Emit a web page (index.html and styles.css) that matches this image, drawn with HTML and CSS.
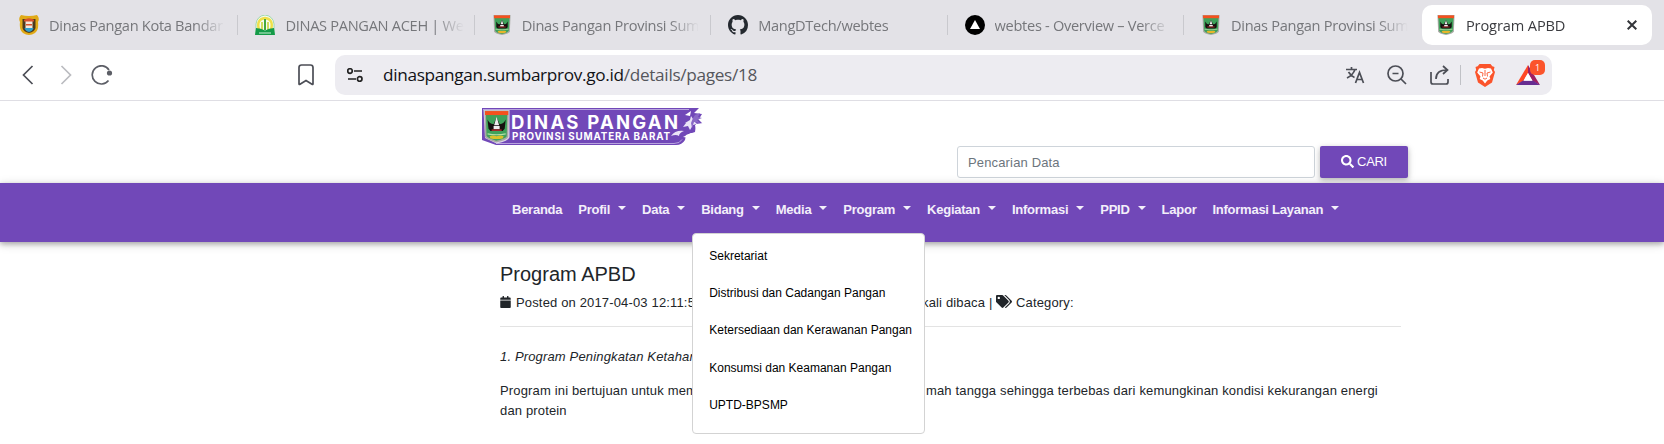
FILE: index.html
```html
<!DOCTYPE html>
<html lang="id">
<head>
<meta charset="utf-8">
<title>Program APBD</title>
<link rel="stylesheet" href="styles.css">
</head>
<body>
<svg class="defs" width="0" height="0" aria-hidden="true">
  <symbol id="crest" viewBox="0 0 24 28">
    <path d="M0 0h24l-1 23q-1 3-11 5Q2 26 1 23z" fill="#a9aaa4"/>
    <path d="M1.500 4h21l-1 18q-1 2.500-9.500 4.500Q3 24.500 2.500 22z" fill="#3fa15a"/>
    <path d="M.8.500h22.400v4H.8z" fill="#f4511e"/>
    <path d="M4 9q1.500 4 5 4l3-6 3 6q3.500 0 5-4v8l-2 2H6l-2-2z" fill="#15100f"/>
    <path d="M12 7.500l2 5.500h-4zM9.500 14h5v2.500h-5z" fill="#eee"/>
    <path d="M7 16h10v1.500H7z" fill="#a02828"/>
    <path d="M3 20q9 1.500 18 0" stroke="#b8dfa8" fill="none"/>
    <path d="M6 22.500q3-1 6 0 3-1 6 0l-1 2.500q-5 1-10 0z" fill="#e8b52a"/>
  </symbol>
</svg>

<div class="tabs">
  <div class="tab">
    <svg class="fav" viewBox="0 0 20 20"><path d="M2 0q8 2 16 0 3 3 1 7 1 8-3 11-6 4-12 0Q0 15 1 7-1 3 2 0z" fill="#e0aa17"/><path d="M3.500 4h13v9q-1 4-6.500 5-5.500-1-6.500-5z" fill="#4d3a1f"/><path d="M6.500 5h7v8h-7z" fill="#f4e9dc"/><path d="M5 4.800q5-3 10 0v1.800H5zM7 9h6v1.500H7z" fill="#d9532c"/><path d="M5.500 13h9q-1 3.500-4.500 4-3.500-.500-4.500-4z" fill="#2d9fd0"/></svg>
    <span class="title">Dinas Pangan Kota Bandar</span>
  </div>
  <div class="tab">
    <svg class="fav" viewBox="0 0 20 20"><path d="M1 19V9q1-8 9-9 8 1 9 9v10z" fill="#f6fbf1" stroke="#8bd39a" stroke-width=".8"/><path d="M4 15Q1 4 10 3q9 1 6 12" fill="none" stroke="#efe04a" stroke-width="2.500"/><path d="M9 4h2v11H9z" fill="#47a83e"/><path d="M7 7v8M13 7v8" stroke="#c6cf2c" stroke-width="1.500"/><path d="M1 13q5 0 9 2.500 4-2.500 9-2.500l1 7H0z" fill="#149a48"/><path d="M4 18h12" stroke="#c9efd4"/></svg>
    <span class="title">DINAS PANGAN ACEH | We</span>
  </div>
  <div class="tab">
    <svg class="fav"><use href="#crest"/></svg>
    <span class="title">Dinas Pangan Provinsi Sum</span>
  </div>
  <div class="tab">
    <svg class="fav" viewBox="0 0 16 16"><path fill="#24292f" d="M8 0C3.580 0 0 3.580 0 8c0 3.540 2.290 6.530 5.470 7.590.4.070.55-.17.55-.38 0-.19-.01-.82-.01-1.490-2.010.37-2.530-.49-2.690-.94-.09-.23-.48-.94-.82-1.130-.28-.15-.68-.52-.01-.53.63-.01 1.080.58 1.230.82.72 1.210 1.870.87 2.330.66.07-.52.28-.87.51-1.070-1.780-.2-3.640-.89-3.640-3.950 0-.87.31-1.590.82-2.150-.08-.2-.36-1.020.08-2.120 0 0 .67-.21 2.200.82.64-.18 1.320-.27 2-.27s1.360.09 2 .27c1.530-1.040 2.200-.82 2.200-.82.44 1.100.16 1.920.08 2.120.51.56.82 1.270.82 2.150 0 3.070-1.870 3.750-3.650 3.950.29.25.54.73.54 1.480 0 1.070-.01 1.930-.01 2.200 0 .21.15.46.55.38A8.010 8.010 0 0 0 16 8c0-4.420-3.580-8-8-8z"/></svg>
    <span class="title">MangDTech/webtes</span>
  </div>
  <div class="tab">
    <svg class="fav" viewBox="0 0 20 20"><circle cx="10" cy="10" r="10"/><path d="M10 5l5 9H5z" fill="#fff"/></svg>
    <span class="title">webtes - Overview – Verce</span>
  </div>
  <div class="tab last">
    <svg class="fav"><use href="#crest"/></svg>
    <span class="title">Dinas Pangan Provinsi Sum</span>
  </div>
  <div class="tab active">
    <svg class="fav"><use href="#crest"/></svg>
    <span class="title">Program APBD</span>
    <svg class="close" viewBox="0 0 10 10"><path d="M.7.700l8.600 8.600M9.300.700L.7 9.300" stroke="#333539" stroke-width="2"/></svg>
  </div>
</div>

<div class="toolbar">
  <svg class="back" viewBox="0 0 12 20"><path d="M10.500 1L1.500 10l9 9"/></svg>
  <svg class="forward" viewBox="0 0 12 20"><path d="M1.500 1l9 9-9 9"/></svg>
  <svg class="reload" viewBox="0 0 22 20"><path d="M17.500 15.500A9.100 9.100 0 1 1 18 5"/><circle cx="18.500" cy="8" r="2.600" fill="#5c5e66" stroke="none"/></svg>
  <svg class="bookmark" viewBox="0 0 16 22"><path d="M1 3.500Q1 1 3.500 1h9Q15 1 15 3.500v16.300q0 1-1 .4L8 16.500l-6 3.700q-1 .6-1-.4z"/></svg>
  <div class="address">
    <svg class="tune" viewBox="0 0 16 14"><circle cx="3" cy="3" r="2.300"/><path d="M7 3h8M1 11h8"/><circle cx="12.700" cy="11" r="2.300"/></svg>
    <span class="url"><b>dinaspangan.sumbarprov.go.id</b>/details/pages/18</span>
    <svg class="translate" viewBox="0 0 20 18"><path d="M1 3.500h11M6.500 1v2.500M10 3.500Q8 9 2 12M3.500 6q2.500 4 6 5.500M10.500 17l4-10.500 4 10.500M12 13.500h5"/></svg>
    <svg class="zoomout" viewBox="0 0 20 20"><circle cx="8.500" cy="8.500" r="7.500"/><path d="M14 14l5 5M5.500 8.500h6"/></svg>
    <svg class="share" viewBox="0 0 20 20"><path d="M1 7v10q0 2 2 2h13q2 0 2-2v-3M6 14Q6 5 17 5M13 1l4.500 4L13 9"/></svg>
    <i class="sep"></i>
    <svg class="lion" viewBox="0 0 20 23"><path d="M4.500 0h11l1.800 2.200L19.500 3l-.7 3L20 8l-3 10.500L10 23l-7-4.500L0 8l1.200-2-.7-3 2.200-.8z" fill="#fb542b"/><path d="M4 4.500l3-.5 3 .8 3-.8 3 .5 1.800 4-3.300 4 .8 2.500-3 1.500-2.300 3-2.300-3-3-1.500.8-2.500-3.300-4z" fill="#fff"/><path d="M4.500 8l3.500 1-.5 3.500M15.500 8L12 9l.5 3.500M10 6v6M8 14l2 1.200L12 14" stroke="#fb542b" fill="none" stroke-width=".9"/></svg>
    <div class="bat">
      <svg viewBox="0 0 24 20"><path d="M12 0L0 20l7.500-4L12 8z" fill="#ff4724"/><path d="M12 0l12 20-7.500-4L12 8z" fill="#9e1f63"/><path d="M0 20l7-4.500h10l7 4.500z" fill="#662d91"/><path d="M12 8l4.500 7.700h-9z" fill="#fff"/></svg>
      <span class="count">1</span>
    </div>
  </div>
</div>

<header class="site-head">
  <svg class="logo" viewBox="0 0 222 40">
    <path d="M0 1h217l-5 5 8 1-3 5 4 4-7 1-1 8-9 3-1 5q-3 5-9 5H14L0 33z" fill="#7148b8"/>
    <path d="M203 8l6-4-1 5zM222 9l-6 3 5 5-8 1 2 8h-6l-8 4 7 1 14 9V8z" fill="#fff"/>
    <path d="M1 2.500h206M14 36.500h178q6 0 8-4" stroke="#b9a4df" fill="none"/>
    <path d="M203 16l5-3 1-4 2 3 4-1-2 4 2 2-4 1-3 5-2-4-5 1 3-4zM189 29q4-6 13-5-5 2-5 5-3-2-8 0z" fill="#ebe4f7"/>
    <path d="M213 8l5-2-2 4 4 1-5 2 3 3-6-1-2 6-1-5 2-5z" fill="#8a69c6"/>
    <path d="M1.500 3h26v27q-1 4-13 6.500L3 31z" fill="#ddd6ea"/>
    <g transform="translate(2.500 3.500) scale(1.010 1.140)">
      <path d="M0 0h24l-.5 23q-1 3-12 5Q1 25 .500 23z" fill="#a9aaa4"/>
      <path d="M1.500 4h21l-.5 18.500q-1 2-10.500 4Q2.500 24 2 22z" fill="#3fa15a"/>
      <path d="M.5.500h23v3.500H.5z" fill="#f4511e"/>
      <path d="M3 8q2 4 6 4l3-6 3 6q4 0 6-4l-1 8-2 2H6l-2-2z" fill="#15100f"/>
      <path d="M12 5.500l2.500 7.500h-5zM9 13.500h6v3H9z" fill="#eee"/>
      <path d="M7 16.500h10V18H7z" fill="#a02828"/>
      <path d="M3 20.500q9 1.500 18 0" stroke="#b8dfa8" fill="none"/>
      <path d="M5 22.500q3.500-1 7 0 3.500-1 7 0l-1 2q-6 1-12 0z" fill="#d9c02a"/>
    </g>
    <text class="l1" x="29" y="21.500" textLength="167">DINAS PANGAN</text>
    <text class="l2" x="30" y="32.500" textLength="158">PROVINSI SUMATERA BARAT</text>
  </svg>
  <form class="search">
    <input type="text" placeholder="Pencarian Data">
    <button type="button"><svg viewBox="0 0 512 512"><path fill="#fff" d="M505 442.700L405.300 343c-4.500-4.500-10.600-7-17-7H372c27.600-35.300 44-79.700 44-128C416 93.100 322.900 0 208 0S0 93.100 0 208s93.100 208 208 208c48.300 0 92.700-16.400 128-44v16.300c0 6.400 2.500 12.500 7 17l99.700 99.700c9.400 9.400 24.600 9.400 33.900 0l28.300-28.300c9.400-9.400 9.400-24.600.1-34zM208 336c-70.700 0-128-57.200-128-128 0-70.700 57.200-128 128-128 70.700 0 128 57.200 128 128 0 70.700-57.200 128-128 128z"/></svg>CARI</button>
  </form>
</header>

<nav class="menu">
  <a>Beranda</a>
  <a class="dd">Profil</a>
  <a class="dd">Data</a>
  <div class="open"><a class="dd">Bidang</a>
    <ul class="drop">
      <li>Sekretariat</li>
      <li>Distribusi dan Cadangan Pangan</li>
      <li>Ketersediaan dan Kerawanan Pangan</li>
      <li>Konsumsi dan Keamanan Pangan</li>
      <li>UPTD-BPSMP</li>
    </ul>
  </div>
  <a class="dd">Media</a>
  <a class="dd">Program</a>
  <a class="dd">Kegiatan</a>
  <a class="dd">Informasi</a>
  <a class="dd">PPID</a>
  <a>Lapor</a>
  <a class="dd">Informasi Layanan</a>
</nav>

<main class="article">
  <h1>Program APBD</h1>
  <div class="meta"><span class="lead"><svg class="cal" viewBox="0 0 448 512"><path d="M0 464c0 26.500 21.500 48 48 48h352c26.500 0 48-21.500 48-48V192H0v272zM448 112v48H0v-48c0-26.500 21.500-48 48-48h48V16q0-16 16-16h32q16 0 16 16v48h128V16q0-16 16-16h32q16 0 16 16v48h48c26.500 0 48 21.500 48 48z"/></svg>Posted on 2017-04-03 12:11:5</span><span>kali dibaca | <svg class="tags" viewBox="0 0 640 512"><path d="M497.900 225.900L286.100 14.100A48 48 0 0 0 252.100 0H48C21.500 0 0 21.500 0 48v204.100a48 48 0 0 0 14.100 33.900l211.800 211.800c18.700 18.700 49.100 18.700 67.900 0l204.100-204.100c18.700-18.700 18.700-49.100 0-67.800zM112 160a48 48 0 1 1 0-96 48 48 0 0 1 0 96zm513.900 133.800L421.800 497.900c-18.700 18.700-49.100 18.700-67.900 0l-.4-.4L527.600 323.500c17-17 26.400-39.600 26.400-63.600s-9.400-46.600-26.400-63.600L331.400 0h48.700a48 48 0 0 1 33.900 14.100l211.800 211.800c18.800 18.800 18.800 49.200.1 67.900z"/></svg> Category:</span></div>
  <hr>
  <p><em>1. Program Peningkatan Ketahan</em></p>
  <p><span class="lead wide">Program ini bertujuan untuk mem</span>mah tangga sehingga terbebas dari kemungkinan kondisi kekurangan energi<br>dan protein</p>
</main>
</body>
</html>
```
FILE: styles.css
```css
* { box-sizing: border-box; }
body { margin: 0; height: 444px; overflow: hidden; background: #fff; color: #212529; font-family: "Liberation Sans", Arial, sans-serif; }
.defs { position: absolute; }

.tabs { display: flex; align-items: center; height: 50px; padding-left: 2px; background: #e3e2e7; font: 14.600px "Open Sans", "Noto Sans", sans-serif; letter-spacing: -.3px; color: #76777b; }
.tab { display: flex; align-items: center; gap: 10px; width: 236.400px; height: 20px; padding: 0 12px 0 17px; border-right: 1px solid #c9c9ce; flex: none; }
.tab.last { border-color: transparent; }
.tab .fav { width: 20px; height: 20px; flex: none; }
.title { flex: 1; white-space: nowrap; line-height: 24px; -webkit-mask-image: linear-gradient(90deg, #000 calc(100% - 30px), transparent); mask-image: linear-gradient(90deg, #000 calc(100% - 30px), transparent); }
.tab.active { width: 230px; height: 40px; margin-left: 1.600px; padding: 0 15px 0 14px; border: 0; border-radius: 10px; background: #fff; color: #3b3c40; letter-spacing: -.12px; }
.close { width: 10px; height: 10px; }

.toolbar { display: flex; align-items: center; height: 51px; border-bottom: 1px solid #dfdee4; padding: 0 0 0 22px; }
.toolbar svg { flex: none; fill: none; stroke: #4c4e56; stroke-width: 1.700; }
.back { width: 12px; height: 20px; }
.toolbar .forward { width: 12px; height: 20px; margin-left: 26px; stroke: #bbbcc0; }
.toolbar .reload { width: 22px; height: 20px; margin-left: 19px; stroke: #5c5e66; }
.toolbar .bookmark { width: 16px; height: 22px; margin-left: 185px; }
.address { display: flex; align-items: center; width: 1217px; height: 40px; margin-left: 21px; padding-left: 12px; border-radius: 10px; background: #edecf1; }
.toolbar .tune { width: 16px; height: 14px; stroke: #222; }
.url { width: 962px; margin-left: 20px; font: 17.200px/24px "Open Sans", "Noto Sans", sans-serif; letter-spacing: -.31px; color: #55565c; }
.url b { font-weight: 400; color: #111216; }
.translate { width: 20px; height: 18px; }
.zoomout { width: 20px; height: 20px; margin-left: 22px; }
.share { width: 20px; height: 20px; margin-left: 23px; }
.sep { width: 1px; height: 20px; margin-left: 10px; background: #c0c1c6; }
.toolbar .lion { width: 20px; height: 23px; margin-left: 14px; stroke: none; }
.bat { position: relative; width: 24px; height: 20px; margin-left: 21px; }
.toolbar .bat svg { width: 24px; height: 20px; display: block; stroke: none; }
.count { position: absolute; left: 14px; top: -5px; width: 15px; height: 15px; border-radius: 5px; background: #fb542b; color: #fff; font: 9px/15px "Open Sans", sans-serif; text-align: center; }

.site-head { display: flex; justify-content: space-between; align-items: flex-start; height: 82px; padding: 6px 256px 0 482px; }
.logo { width: 222px; height: 40px; }
.logo text { fill: #fff; font-family: Inter, sans-serif; font-weight: 700; }
.l1 { font-size: 18.500px; }
.l2 { font-size: 9.800px; }
.search { display: flex; gap: 5px; padding-top: 39px; }
.search input { width: 358px; height: 32px; padding: 0 10px; border: 1px solid #ced4da; border-radius: 3px; font: 13px "Liberation Sans", Arial, sans-serif; letter-spacing: .15px; outline: none; }
.search input::placeholder { color: #6c757d; }
.search button { width: 88px; height: 32px; border: 0; border-radius: 2px; padding: 0 0 2px; background: #7148b8; color: #fff; font: 13px "Liberation Sans", Arial, sans-serif; letter-spacing: -.3px; box-shadow: 0 2px 5px rgba(0,0,0,.2), 0 2px 8px rgba(0,0,0,.12); }
.search button svg { width: 13px; height: 13px; margin-right: 3px; vertical-align: -2px; }

.menu { display: flex; height: 59px; padding: 17px 0 0 504px; background: #7148b8; box-shadow: 0 2px 5px rgba(0,0,0,.26), 0 2px 10px rgba(0,0,0,.16); position: relative; color: #f3effa; font-size: 13px; font-weight: 700; line-height: 20px; letter-spacing: -.25px; }
.menu a { display: block; padding: 0 8px; white-space: nowrap; }
.dd::after { content: ""; display: inline-block; margin-left: 8px; border: 4px solid transparent; border-top-color: currentColor; border-bottom: 0; vertical-align: 4px; }
.open { position: relative; }
.drop { position: absolute; left: -1px; top: 33px; width: 233px; height: 201px; margin: 0; padding: 4px 0 0 16px; list-style: none; border: 1px solid #d3d3d3; border-radius: 4px; background: #fff; color: #000; font-size: 12px; font-weight: 400; line-height: 37.200px; letter-spacing: 0; white-space: nowrap; }

.article { padding: 20px 263px 0 500px; font-size: 13px; line-height: 20px; letter-spacing: .155px; }
h1 { margin: 0; font-size: 20px; font-weight: 400; line-height: 24px; letter-spacing: 0; }
.meta { margin-top: 7px; line-height: 20px; white-space: nowrap; }
.lead { display: inline-block; width: 422px; vertical-align: top; }
.lead.wide { width: 426px; }
.cal { width: 11px; height: 12px; margin-right: 5px; vertical-align: -1px; fill: #212529; }
.tags { width: 16px; height: 13px; vertical-align: -1px; fill: #212529; }
hr { margin: 13px 0 20px; border: 0; border-top: 1px solid #e3e3e3; }
p { margin: 0 0 14px; white-space: nowrap; }
```
